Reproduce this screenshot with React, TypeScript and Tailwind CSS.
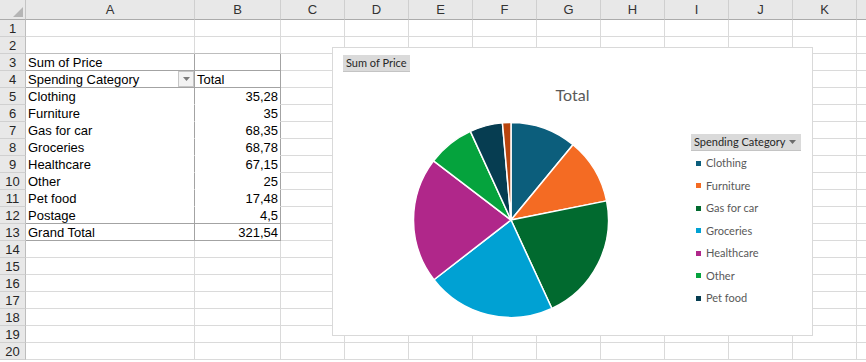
import React from "react";

const sheetFont = { fontFamily: '"Liberation Sans", Arial, sans-serif' };
const chartFont = { fontFamily: 'Lato, "Noto Sans", sans-serif' };

const columns = [
  { key: "A", w: "w-[169px]" },
  { key: "B", w: "w-[86px]" },
  { key: "C", w: "w-[64px]" },
  { key: "D", w: "w-[64px]" },
  { key: "E", w: "w-[64px]" },
  { key: "F", w: "w-[64px]" },
  { key: "G", w: "w-[64px]" },
  { key: "H", w: "w-[64px]" },
  { key: "I", w: "w-[64px]" },
  { key: "J", w: "w-[64px]" },
  { key: "K", w: "w-[64px]" },
  { key: "", w: "w-[64px]" },
];

const pivot: [string, string][] = [
  ["Clothing", "35,28"],
  ["Furniture", "35"],
  ["Gas for car", "68,35"],
  ["Groceries", "68,78"],
  ["Healthcare", "67,15"],
  ["Other", "25"],
  ["Pet food", "17,48"],
  ["Postage", "4,5"],
];

const slices = [
  { name: "Clothing", value: 35.28, color: "#0c5e7c" },
  { name: "Furniture", value: 35, color: "#f46b23" },
  { name: "Gas for car", value: 68.35, color: "#016a2f" },
  { name: "Groceries", value: 68.78, color: "#00a1d3" },
  { name: "Healthcare", value: 67.15, color: "#b0278a" },
  { name: "Other", value: 25, color: "#05a33d" },
  { name: "Pet food", value: 17.48, color: "#063d51" },
  { name: "Postage", value: 4.5, color: "#b8450e" },
];

function cellText(row: number, col: string): { text: string; right?: boolean; filter?: boolean } {
  if (col === "A") {
    if (row === 3) return { text: "Sum of Price" };
    if (row === 4) return { text: "Spending Category", filter: true };
    if (row >= 5 && row <= 12) return { text: pivot[row - 5][0] };
    if (row === 13) return { text: "Grand Total" };
  }
  if (col === "B") {
    if (row === 4) return { text: "Total" };
    if (row >= 5 && row <= 12) return { text: pivot[row - 5][1], right: true };
    if (row === 13) return { text: "321,54", right: true };
  }
  return { text: "" };
}

function borderClasses(row: number, col: string) {
  const inPivot = (col === "A" || col === "B") && row >= 3 && row <= 13;
  const right = inPivot ? "border-r-[#a3a3a3]" : "border-r-[#dadada]";
  let bottom = "border-b-[#dadada]";
  if (inPivot) {
    if (row >= 5 && row <= 11) bottom = "border-b-white";
    else bottom = "border-b-[#a3a3a3]";
  }
  if ((col === "A" || col === "B") && row === 2) bottom = "border-b-[#bdbdbd]";
  return `${right} ${bottom}`;
}

function Cell({ row, col, w }: { row: number; col: string; w: string }) {
  const c = cellText(row, col);
  return (
    <div
      className={`${w} h-[17px] shrink-0 border-r border-b ${borderClasses(row, col)} flex items-center overflow-hidden text-[13px] leading-[16px] text-black px-[2px] ${
        c.right ? "justify-end" : "justify-between"
      }`}
    >
      <span className="whitespace-nowrap pt-[1px]">{c.text}</span>
      {c.filter && (
        <span className="w-[16px] h-[16px] -mr-[2px] bg-[#f2f2f2] border border-[#c6c6c6] flex items-center justify-center">
          <svg width="7" height="4" viewBox="0 0 7 4">
            <path d="M0 0 L7 0 L3.5 4 Z" fill="#7a7a7a" />
          </svg>
        </span>
      )}
    </div>
  );
}

function PieChart() {
  const total = slices.reduce((s, d) => s + d.value, 0);
  const cx = 100;
  const cy = 100;
  const r = 97.5;
  let angle = -Math.PI / 2;
  return (
    <svg width="200" height="200" viewBox="0 0 200 200">
      {slices.map((s) => {
        const a0 = angle;
        const a1 = angle + (s.value / total) * Math.PI * 2;
        angle = a1;
        const x0 = cx + r * Math.cos(a0);
        const y0 = cy + r * Math.sin(a0);
        const x1 = cx + r * Math.cos(a1);
        const y1 = cy + r * Math.sin(a1);
        const large = a1 - a0 > Math.PI ? 1 : 0;
        return (
          <path
            key={s.name}
            d={`M ${cx} ${cy} L ${x0} ${y0} A ${r} ${r} 0 ${large} 1 ${x1} ${y1} Z`}
            fill={s.color}
            stroke="#ffffff"
            strokeWidth="1.5"
            strokeLinejoin="round"
          />
        );
      })}
    </svg>
  );
}

function Chart() {
  return (
    <div
      className="absolute left-[332px] top-[47px] w-[481px] h-[289px] bg-white border border-[#d9d9d9] flex flex-col"
      style={chartFont}
    >
      <div className="ml-[10px] mt-[7px] self-start h-[17px] px-[3px] bg-[#dadada] border-b border-[#c4c4c4] text-[11px] leading-[16px] text-[#262626]">
        Sum of Price
      </div>
      <div className="mt-[13px] h-[20px] text-center text-[16px] leading-[20px] text-[#595959]">Total</div>
      <div className="mt-[15px] flex items-start">
        <div className="ml-[78px]">
          <PieChart />
        </div>
        <div className="ml-[80px] mt-[14px] flex flex-col">
          <div className="h-[17px] w-[110px] bg-[#dadada] border-b border-[#c4c4c4] flex items-center justify-between px-[3px] text-[11px] text-[#262626]">
            <span>Spending Category</span>
            <svg width="7" height="4" viewBox="0 0 7 4" className="mr-[2px]">
              <path d="M0 0 L7 0 L3.5 4 Z" fill="#6b6b6b" />
            </svg>
          </div>
          <div className="mt-[1px] flex flex-col">
            {slices.slice(0, 7).map((s) => (
              <div key={s.name} className="h-[22.5px] flex items-center pl-[5px] gap-[5px] text-[11px] text-[#595959]">
                <span className="w-[5px] h-[5px] shrink-0" style={{ backgroundColor: s.color }} />
                <span>{s.name}</span>
              </div>
            ))}
          </div>
        </div>
      </div>
    </div>
  );
}

export default function App() {
  const rows = Array.from({ length: 20 }, (_, i) => i + 1);
  return (
    <div className="relative w-[866px] h-[362px] overflow-hidden bg-white" style={sheetFont}>
      <div className="flex">
        <div className="w-[26px] h-[20px] shrink-0 bg-[#e8e8e8] border-r border-b border-r-[#c4c4c4] border-b-[#ababab] flex items-end justify-end p-[2px]">
          <svg width="10" height="10" viewBox="0 0 10 10">
            <path d="M10 0 L10 10 L0 10 Z" fill="#b5b5b5" />
          </svg>
        </div>
        {columns.map((c, i) => (
          <div
            key={i}
            className={`${c.w} h-[20px] shrink-0 bg-[#e8e8e8] border-r border-b border-r-[#cfcfcf] border-b-[#ababab] flex items-center justify-center text-[13px] text-[#333333]`}
          >
            {c.key}
          </div>
        ))}
      </div>
      {rows.map((r) => (
        <div key={r} className="flex">
          <div className="w-[26px] h-[17px] shrink-0 bg-[#e8e8e8] border-r border-b border-r-[#bdbdbd] border-b-[#d0d0d0] flex items-center justify-center text-[13px] leading-[16px] text-[#262626] pt-[1px]">
            {r}
          </div>
          {columns.map((c, i) => (
            <Cell key={i} row={r} col={c.key} w={c.w} />
          ))}
        </div>
      ))}
      <Chart />
    </div>
  );
}
